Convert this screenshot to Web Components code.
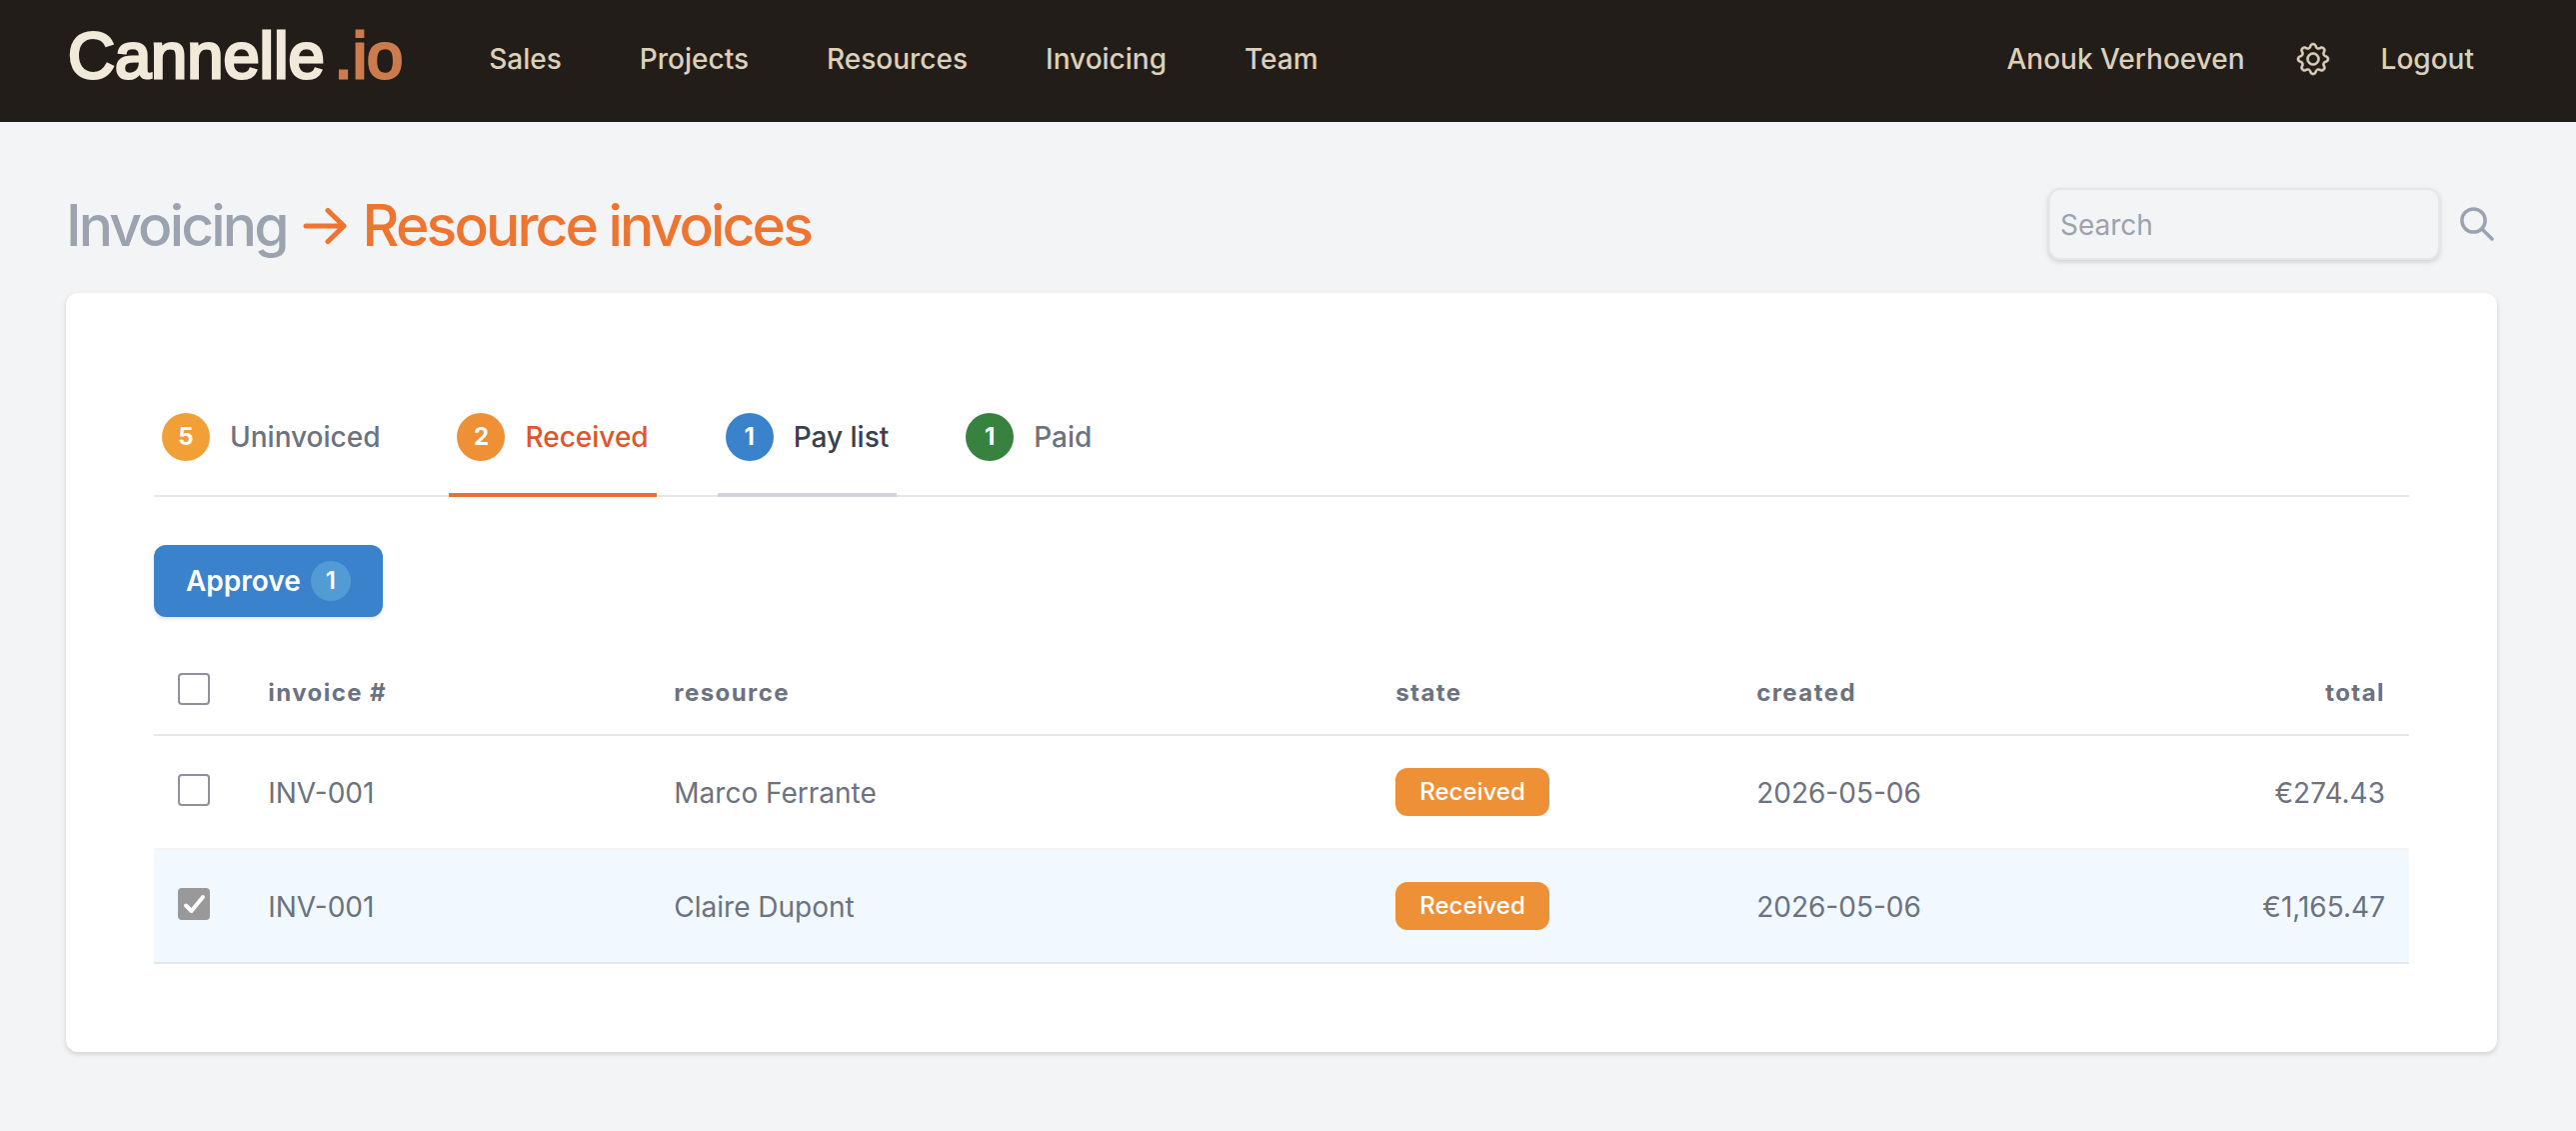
<!DOCTYPE html>
<html lang="en">
<head>
<meta charset="utf-8">
<title>Resource invoices - Cannelle.io</title>
<style>
    body {
        margin: 0;
        min-height: 100vh;
        background: #f3f4f6;
        color: #6b7280;
        font-family: Inter, "Liberation Sans", sans-serif;
        font-size: 28px;
        line-height: 40px;
    }
</style>
</head>
<body>

<app-navbar>
    <nav-link href="#sales">Sales</nav-link>
    <nav-link href="#projects">Projects</nav-link>
    <nav-link href="#resources">Resources</nav-link>
    <nav-link href="#invoicing">Invoicing</nav-link>
    <nav-link href="#team">Team</nav-link>
    <nav-link slot="user" href="#profile">Anouk Verhoeven</nav-link>
    <nav-link slot="user" href="#settings" label="Settings">
        <svg width="32" height="32" viewBox="0 0 16 16" fill="currentColor" stroke="currentColor" stroke-width=".3" overflow="visible" aria-hidden="true">
            <path d="M8 4.754a3.246 3.246 0 1 0 0 6.492 3.246 3.246 0 0 0 0-6.492zM5.754 8a2.246 2.246 0 1 1 4.492 0 2.246 2.246 0 0 1-4.492 0z"/>
            <path d="M9.796 1.343c-.527-1.79-3.065-1.79-3.592 0l-.094.319a.873.873 0 0 1-1.255.52l-.292-.16c-1.64-.892-3.433.902-2.54 2.541l.159.292a.873.873 0 0 1-.52 1.255l-.319.094c-1.79.527-1.79 3.065 0 3.592l.319.094a.873.873 0 0 1 .52 1.255l-.16.292c-.892 1.64.901 3.434 2.541 2.54l.292-.159a.873.873 0 0 1 1.255.52l.094.319c.527 1.79 3.065 1.79 3.592 0l.094-.319a.873.873 0 0 1 1.255-.52l.292.16c1.64.893 3.434-.902 2.54-2.541l-.159-.292a.873.873 0 0 1 .52-1.255l.319-.094c1.79-.527 1.79-3.065 0-3.592l-.319-.094a.873.873 0 0 1-.52-1.255l.16-.292c.893-1.64-.902-3.433-2.541-2.54l-.292.159a.873.873 0 0 1-1.255-.52l-.094-.319zm-2.633.283c.246-.835 1.428-.835 1.674 0l.094.319a1.873 1.873 0 0 0 2.693 1.115l.291-.16c.764-.415 1.6.42 1.184 1.185l-.159.292a1.873 1.873 0 0 0 1.116 2.692l.318.094c.835.246.835 1.428 0 1.674l-.319.094a1.873 1.873 0 0 0-1.115 2.693l.16.291c.415.764-.42 1.6-1.185 1.184l-.291-.159a1.873 1.873 0 0 0-2.693 1.116l-.094.318c-.246.835-1.428.835-1.674 0l-.094-.319a1.873 1.873 0 0 0-2.692-1.115l-.292.16c-.764.415-1.6-.42-1.184-1.185l.159-.291A1.873 1.873 0 0 0 1.945 8.93l-.319-.094c-.835-.246-.835-1.428 0-1.674l.319-.094A1.873 1.873 0 0 0 3.06 4.377l-.16-.292c-.415-.764.42-1.6 1.185-1.184l.292.159a1.873 1.873 0 0 0 2.692-1.115l.094-.319z"/>
        </svg>
    </nav-link>
    <nav-link slot="user" href="#logout">Logout</nav-link>
</app-navbar>

<page-layout>
    <page-title slot="title" section="Invoicing" page="Resource invoices"></page-title>
    <search-box slot="search"></search-box>

    <state-tabs>
        <state-tab count="5" color="#f1a038">Uninvoiced</state-tab>
        <state-tab count="2" color="#ee9036" active>Received</state-tab>
        <state-tab count="1" color="#3a82cc" hovered>Pay list</state-tab>
        <state-tab count="1" color="#38823f">Paid</state-tab>
    </state-tabs>
    <action-button count="1">Approve</action-button>
    <invoice-table></invoice-table>
</page-layout>

<script>
// Top bar
class AppNavbar extends HTMLElement {
    constructor() {
        super();
        const shadow = this.attachShadow({ mode: 'open' });
        shadow.innerHTML = `
            <style>
                :host {
                    display: block;
                    background: #221d19;
                }
                nav {
                    display: flex;
                    align-items: center;
                    gap: 78px;
                    box-sizing: border-box;
                    min-height: 122px;
                    padding: 0 102px 4px 68px;
                }
                .logo {
                    margin: 0 8px 6px 0;
                    color: #f1e9d9;
                    font: 65px/76px "Liberation Sans", sans-serif;
                    text-decoration: none;
                    /* between the regular and the bold weight */
                    -webkit-text-stroke: 3px currentColor;
                }
                .logo span {
                    color: #cb7b4c;
                    margin-left: 10px;
                }
                .user {
                    display: flex;
                    align-items: center;
                    gap: 52px;
                    margin-left: auto;
                }
            </style>
            <nav>
                <a class="logo" href="#home">Cannelle<span>.io</span></a>
                <slot></slot>
                <div class="user"><slot name="user"></slot></div>
            </nav>
        `;
    }
}
customElements.define('app-navbar', AppNavbar);

class NavLink extends HTMLElement {
    constructor() {
        super();
        const shadow = this.attachShadow({ mode: 'open' });
        shadow.innerHTML = `
            <style>
                :host { display: block; }
                a {
                    display: flex;
                    align-items: center;
                    color: #ddd0ba;
                    font-weight: 500;
                    text-decoration: none;
                    white-space: nowrap;
                }
            </style>
            <a><slot></slot></a>
        `;
    }
    connectedCallback() {
        const link = this.shadowRoot.querySelector('a');
        link.href = this.getAttribute('href');
        if (this.hasAttribute('label')) {
            link.setAttribute('aria-label', this.getAttribute('label'));
        }
    }
}
customElements.define('nav-link', NavLink);

// Title row on top, white card below
class PageLayout extends HTMLElement {
    constructor() {
        super();
        const shadow = this.attachShadow({ mode: 'open' });
        shadow.innerHTML = `
            <style>
                :host {
                    display: block;
                    padding: 66px 79px 66px 66px;
                }
                header {
                    display: flex;
                    align-items: center;
                    justify-content: space-between;
                    margin-bottom: 33px;
                }
                main {
                    padding: 88px;
                    background: #fff;
                    border-radius: 12px;
                    box-shadow: 0 2px 6px rgba(0, 0, 0, .1), 0 2px 4px rgba(0, 0, 0, .06);
                }
            </style>
            <header>
                <slot name="title"></slot>
                <slot name="search"></slot>
            </header>
            <main><slot></slot></main>
        `;
    }
}
customElements.define('page-layout', PageLayout);

class PageTitle extends HTMLElement {
    constructor() {
        super();
        this.attachShadow({ mode: 'open' });
    }
    connectedCallback() {
        this.shadowRoot.innerHTML = `
            <style>
                :host { display: block; }
                h1 {
                    display: flex;
                    align-items: center;
                    gap: 16px;
                    margin: 0;
                    padding-top: 4px;
                    font-size: 57px;
                    line-height: 68px;
                    font-weight: 450;
                    letter-spacing: -0.05em;
                    color: #ee742f;
                }
                a {
                    color: #9ca3b0;
                    text-decoration: none;
                }
            </style>
            <h1>
                <a href="#invoicing">${this.getAttribute('section')}</a>
                <svg width="44" height="38" viewBox="0 0 44 38" fill="none" stroke="currentColor"
                     stroke-width="5" stroke-linecap="round" stroke-linejoin="round" aria-hidden="true">
                    <path d="M3 19H41M25 3.500L41 19L25 34.500"/>
                </svg>
                <span>${this.getAttribute('page')}</span>
            </h1>
        `;
    }
}
customElements.define('page-title', PageTitle);

class SearchBox extends HTMLElement {
    constructor() {
        super();
        const shadow = this.attachShadow({ mode: 'open' });
        shadow.innerHTML = `
            <style>
                :host { display: block; }
                form {
                    display: flex;
                    align-items: center;
                    gap: 20px;
                    padding-right: 3px;
                }
                input {
                    box-sizing: border-box;
                    width: 392px;
                    height: 72px;
                    padding: 2px 10px 0;
                    border: 2px solid #e5e7ea;
                    border-radius: 12px;
                    background: #f3f4f6;
                    box-shadow: 0 2px 6px rgba(0, 0, 0, .1), 0 2px 4px rgba(0, 0, 0, .06);
                    color: #374151;
                    font: inherit;
                }
                input::placeholder { color: #9ca3b0; opacity: 1; }
                button {
                    display: flex;
                    padding: 0;
                    border: 0;
                    background: none;
                    color: #9ca3b0;
                    cursor: pointer;
                }
            </style>
            <form role="search">
                <input type="text" placeholder="Search" aria-label="Search">
                <button type="button" aria-label="Run search">
                    <svg width="34" height="34" viewBox="0 0 34 34" fill="none" stroke="currentColor"
                         stroke-width="3.500" stroke-linecap="round">
                        <circle cx="13.500" cy="13.500" r="11.600"/>
                        <path d="M22 22L32 32"/>
                    </svg>
                </button>
            </form>
        `;
    }
}
customElements.define('search-box', SearchBox);

class StateTabs extends HTMLElement {
    constructor() {
        super();
        const shadow = this.attachShadow({ mode: 'open' });
        shadow.innerHTML = `
            <style>
                :host { display: block; }
                nav {
                    display: flex;
                    gap: 61px;
                    /* the tab borders lie over this line */
                    box-shadow: inset 0 -2px #e5e7eb;
                }
            </style>
            <nav><slot></slot></nav>
        `;
    }
}
customElements.define('state-tabs', StateTabs);

class StateTab extends HTMLElement {
    constructor() {
        super();
        const shadow = this.attachShadow({ mode: 'open' });
        shadow.innerHTML = `
            <style>
                :host { display: block; }
                a {
                    display: flex;
                    align-items: center;
                    gap: 20px;
                    padding: 32px 8px;
                    border-bottom: 4px solid transparent;
                    color: #6b7280;
                    font-weight: 500;
                    text-decoration: none;
                }
                .count {
                    width: 48px;
                    border-radius: 50%;
                    color: #fff;
                    font-size: 24px;
                    line-height: 48px;
                    font-weight: 700;
                    text-align: center;
                }
                :host([active]) a {
                    border-color: #eb722e;
                    color: #e05627;
                }
                :host([hovered]) a, a:hover {
                    border-color: #d1d5db;
                    color: #374151;
                }
            </style>
            <a href="#"><span class="count"></span><slot></slot></a>
        `;
    }
    connectedCallback() {
        const count = this.shadowRoot.querySelector('.count');
        count.textContent = this.getAttribute('count');
        count.style.background = this.getAttribute('color');
    }
}
customElements.define('state-tab', StateTab);

class ActionButton extends HTMLElement {
    constructor() {
        super();
        const shadow = this.attachShadow({ mode: 'open' });
        shadow.innerHTML = `
            <style>
                :host {
                    display: block;
                    margin: 48px 0 32px;
                }
                button {
                    display: flex;
                    align-items: center;
                    gap: 10px;
                    height: 72px;
                    padding: 0 32px;
                    border: 0;
                    border-radius: 12px;
                    background: #3a82cc;
                    box-shadow: 0 2px 4px rgba(0, 0, 0, .1);
                    color: #fff;
                    font: inherit;
                    font-weight: 600;
                    cursor: pointer;
                }
                .count {
                    width: 40px;
                    border-radius: 50%;
                    background: #529bd5;
                    font-size: 24px;
                    line-height: 40px;
                }
            </style>
            <button type="button"><slot></slot><span class="count"></span></button>
        `;
    }
    connectedCallback() {
        this.shadowRoot.querySelector('.count').textContent = this.getAttribute('count');
    }
}
customElements.define('action-button', ActionButton);

class CheckBox extends HTMLElement {
    constructor() {
        super();
        const shadow = this.attachShadow({ mode: 'open' });
        shadow.innerHTML = `
            <style>
                :host { display: block; }
                label {
                    display: grid;
                    width: 32px;
                    height: 32px;
                }
                input, svg { grid-area: 1 / 1; }
                input {
                    appearance: none;
                    width: 32px;
                    height: 32px;
                    margin: 0;
                    border: 2px solid #8f8f9d;
                    border-radius: 4px;
                    background: #fff;
                }
                input:checked {
                    border-color: #999;
                    background: #999;
                }
                svg {
                    visibility: hidden;
                    pointer-events: none;
                }
                input:checked + svg { visibility: visible; }
            </style>
            <label>
                <input type="checkbox">
                <svg width="32" height="32" viewBox="0 0 32 32" fill="none" stroke="#fff"
                     stroke-width="4" stroke-linecap="round" stroke-linejoin="round">
                    <path d="M8 17.500L13.500 23L25 9"/>
                </svg>
            </label>
        `;
    }
    connectedCallback() {
        const input = this.shadowRoot.querySelector('input');
        input.checked = this.hasAttribute('checked');
        input.setAttribute('aria-label', this.getAttribute('label'));
    }
}
customElements.define('check-box', CheckBox);

class StateBadge extends HTMLElement {
    constructor() {
        super();
        const shadow = this.attachShadow({ mode: 'open' });
        shadow.innerHTML = `
            <style>
                :host {
                    display: inline-block;
                    padding: 0 24px;
                    border-radius: 12px;
                    background: #ee9036;
                    color: #fff;
                    font-size: 24px;
                    line-height: 48px;
                    font-weight: 500;
                    vertical-align: middle;
                }
            </style>
            <slot></slot>
        `;
    }
}
customElements.define('state-badge', StateBadge);

const invoices = [
    { number: 'INV-001', resource: 'Marco Ferrante', state: 'Received', created: '2026-05-06', total: '€274.43', checked: false },
    { number: 'INV-001', resource: 'Claire Dupont', state: 'Received', created: '2026-05-06', total: '€1,165.47', checked: true }
];

class InvoiceTable extends HTMLElement {
    constructor() {
        super();
        const shadow = this.attachShadow({ mode: 'open' });
        const rows = invoices.map(invoice => `
            <tr class="${invoice.checked ? 'selected' : ''}">
                <td class="check"><check-box label="Select ${invoice.resource}" ${invoice.checked ? 'checked' : ''}></check-box></td>
                <td>${invoice.number}</td>
                <td>${invoice.resource}</td>
                <td class="state"><state-badge>${invoice.state}</state-badge></td>
                <td>${invoice.created}</td>
                <td class="total">${invoice.total}</td>
            </tr>
        `).join('');

        shadow.innerHTML = `
            <style>
                :host { display: block; }
                table {
                    width: 100%;
                    table-layout: fixed;
                    border-spacing: 0;
                }
                th, td {
                    box-sizing: border-box;
                    padding: 2px 24px 0;
                    text-align: left;
                }
                th {
                    height: 87px;
                    border-bottom: 2px solid #e5e7eb;
                    font-size: 24px;
                    font-weight: 700;
                    letter-spacing: 0.06em;
                }
                td {
                    height: 114px;
                    border-bottom: 2px solid #f3f4f6;
                }
                tr:last-child td { border-color: #e5e7eb; }
                .selected td { background: #f1f8fe; }
                .state { padding: 0 24px; }
                .check { padding: 0 24px 4px; }
                th.check { padding-bottom: 6px; }
                .total { text-align: right; }
            </style>
            <table>
                <colgroup>
                    <col style="width: 4%">
                    <col style="width: 18%">
                    <col style="width: 32%">
                    <col style="width: 16%">
                    <col style="width: 16%">
                    <col style="width: 14%">
                </colgroup>
                <thead>
                    <tr>
                        <th class="check"><check-box label="Select all"></check-box></th>
                        <th>invoice #</th>
                        <th>resource</th>
                        <th>state</th>
                        <th>created</th>
                        <th class="total">total</th>
                    </tr>
                </thead>
                <tbody>${rows}</tbody>
            </table>
        `;
    }
}
customElements.define('invoice-table', InvoiceTable);
</script>
</body>
</html>
